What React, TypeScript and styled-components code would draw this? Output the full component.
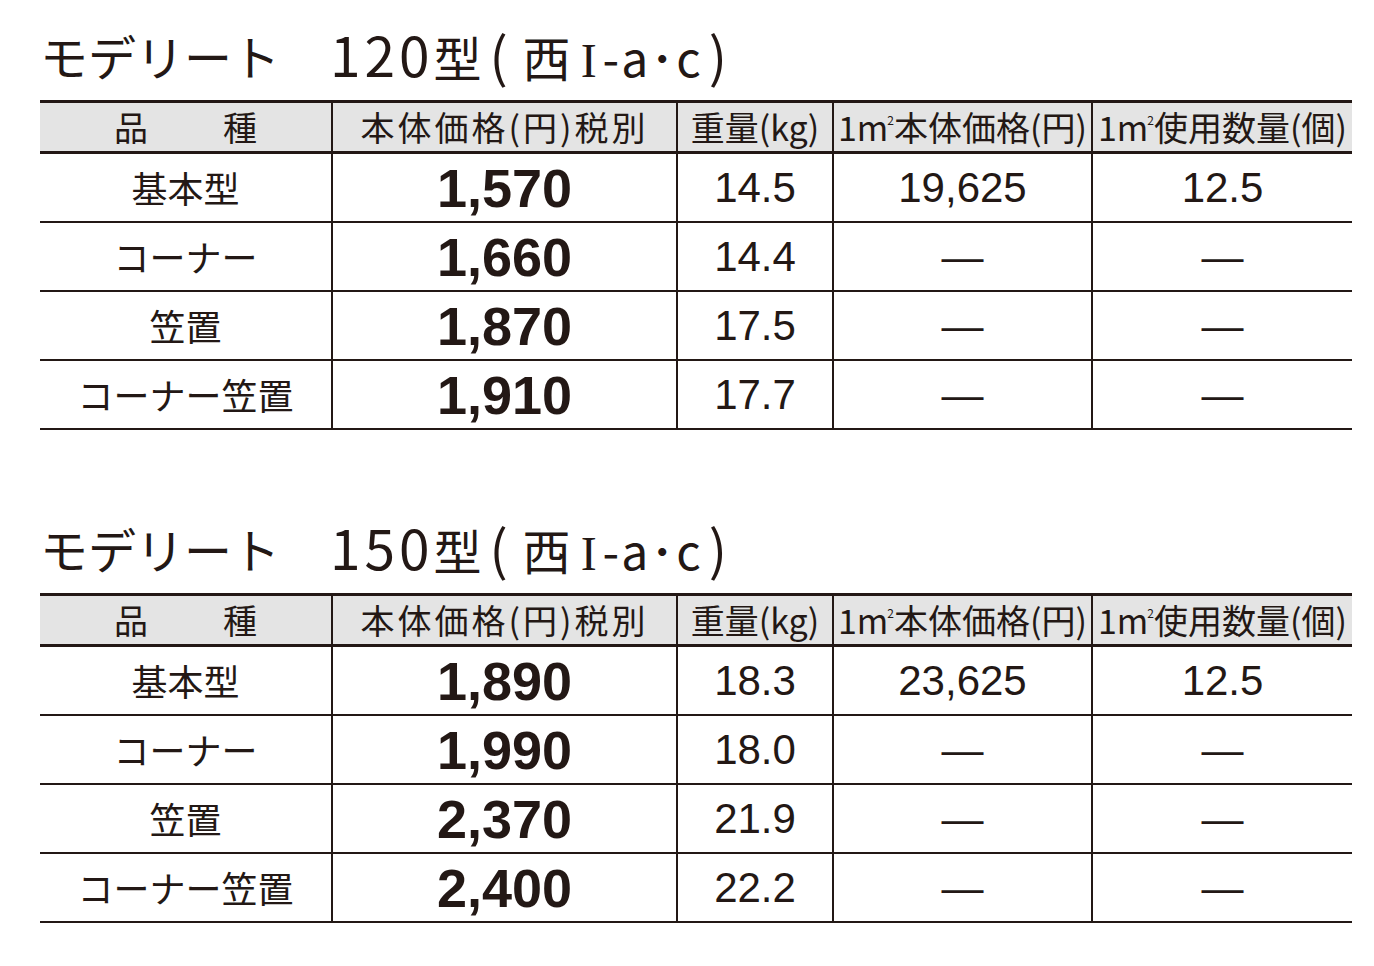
import React from 'react';
import styled, { createGlobalStyle } from 'styled-components';

const ink = '#231815';
const jp = '"Noto Sans CJK JP", "Noto Sans", sans-serif';
const latin = '"Liberation Sans", Arial, "Noto Sans CJK JP", sans-serif';

const GlobalStyle = createGlobalStyle`
    html, body {
        margin: 0;
        padding: 0;
        background: #ffffff;
        color: ${ink};
        font-family: ${jp};
    }
`

const Page = styled.div`
    padding: 0 22px 0 40px;
    width: 1312px;
`

const Section = styled.section`
    & + & {
        margin-top: 63px;
    }
`

const Title = styled.h2`
    box-sizing: border-box;
    height: 100px;
    margin: 0;
    padding-top: 10px;
    display: flex;
    align-items: center;
    font-family: ${jp};
    font-weight: 400;
    font-size: 48px;
    line-height: 1;
    color: ${ink};
`

const Name = styled.span`
    width: 290px;
`

const Model = styled.span`
    letter-spacing: 2px;
    white-space: pre;
`

const Digits = styled.span`
    font-size: 55px;
    letter-spacing: 4px;
`

const Paren = styled.span`
    font-size: 54px;
    margin-left: 6px;
`

const Numeral = styled.span`
    font-family: "Liberation Serif", serif;
    margin: 0 4px 0 8px;
`

const Grid = styled.div`
    display: grid;
    grid-template-columns: 293px 345px 156px 259px 259px;
    border-top: 3px solid ${ink};
`

const HeadCell = styled.div<{ $last?: boolean; $spacing?: number }>`
    box-sizing: border-box;
    height: 51px;
    background: #e4e4e4;
    border-bottom: 3px solid ${ink};
    border-right: ${p => (p.$last ? 'none' : `2px solid ${ink}`)};
    display: flex;
    align-items: center;
    justify-content: center;
    font-family: ${jp};
    font-size: 34px;
    line-height: 1.2;
    letter-spacing: ${p => p.$spacing ?? 0}px;
    white-space: nowrap;
    sup {
        font-size: 12px;
        line-height: 0;
        vertical-align: 16px;
        margin-left: -1px;
    }
`

const Spread = styled.span`
    display: flex;
    gap: 75px;
`

const Cell = styled.div<{ $last?: boolean; $kind: 'name' | 'price' | 'num' }>`
    box-sizing: border-box;
    height: 69px;
    border-bottom: 2px solid ${ink};
    border-right: ${p => (p.$last ? 'none' : `2px solid ${ink}`)};
    display: flex;
    align-items: center;
    justify-content: center;
    white-space: nowrap;
    line-height: 1.2;
    font-family: ${p => (p.$kind === 'name' ? jp : latin)};
    font-size: ${p => (p.$kind === 'name' ? 36 : p.$kind === 'price' ? 54 : 42)}px;
    font-weight: ${p => (p.$kind === 'price' ? 700 : 400)};
    padding-top: ${p => (p.$kind === 'name' ? 0 : 2)}px;
`

type Row = { name: string; price: string; weight: string; perM2: string; count: string };

const tables: { size: string; rows: Row[] }[] = [
    {
        size: '120',
        rows: [
            { name: '基本型', price: '1,570', weight: '14.5', perM2: '19,625', count: '12.5' },
            { name: 'コーナー', price: '1,660', weight: '14.4', perM2: '—', count: '—' },
            { name: '笠置', price: '1,870', weight: '17.5', perM2: '—', count: '—' },
            { name: 'コーナー笠置', price: '1,910', weight: '17.7', perM2: '—', count: '—' },
        ],
    },
    {
        size: '150',
        rows: [
            { name: '基本型', price: '1,890', weight: '18.3', perM2: '23,625', count: '12.5' },
            { name: 'コーナー', price: '1,990', weight: '18.0', perM2: '—', count: '—' },
            { name: '笠置', price: '2,370', weight: '21.9', perM2: '—', count: '—' },
            { name: 'コーナー笠置', price: '2,400', weight: '22.2', perM2: '—', count: '—' },
        ],
    },
];

const PriceTable = ({ size, rows }: { size: string; rows: Row[] }) => (
    <Section>
        <Title>
            <Name>モデリート</Name>
            <Model>
                <Digits>{size}</Digits>型<Paren>(</Paren> 西<Numeral>I</Numeral>-a･c<Paren>)</Paren>
            </Model>
        </Title>
        <Grid>
            <HeadCell>
                <Spread>
                    <span>品</span>
                    <span>種</span>
                </Spread>
            </HeadCell>
            <HeadCell $spacing={3}><span>本体価格(円)税別</span></HeadCell>
            <HeadCell><span>重量(kg)</span></HeadCell>
            <HeadCell><span>1m<sup>2</sup>本体価格(円)</span></HeadCell>
            <HeadCell $last><span>1m<sup>2</sup>使用数量(個)</span></HeadCell>
            {rows.map(r => (
                <React.Fragment key={r.name}>
                    <Cell $kind='name'>{r.name}</Cell>
                    <Cell $kind='price'>{r.price}</Cell>
                    <Cell $kind='num'>{r.weight}</Cell>
                    <Cell $kind='num'>{r.perM2}</Cell>
                    <Cell $kind='num' $last>{r.count}</Cell>
                </React.Fragment>
            ))}
        </Grid>
    </Section>
);

const App = () => (
    <>
        <GlobalStyle />
        <Page>
            {tables.map(t => (
                <PriceTable key={t.size} size={t.size} rows={t.rows} />
            ))}
        </Page>
    </>
);

export default App;
